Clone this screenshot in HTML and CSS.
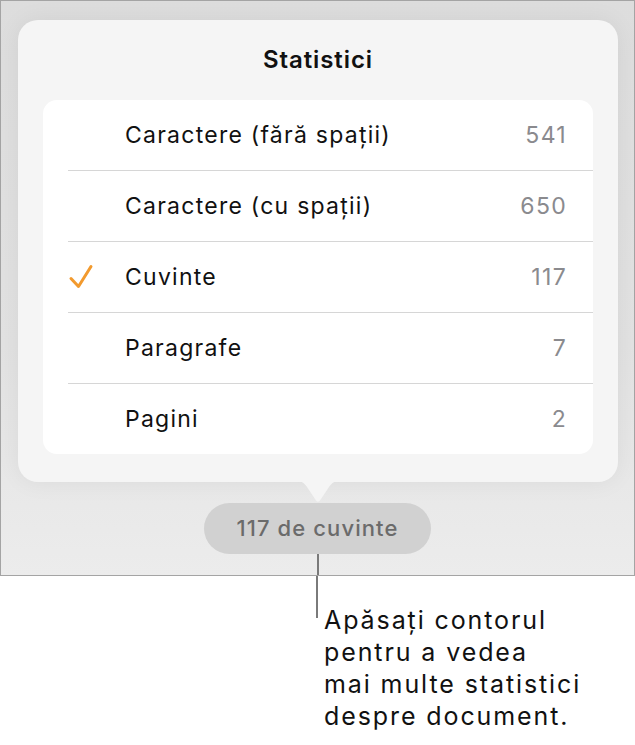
FILE: index.html
```html
<!DOCTYPE html>
<html lang="ro">
<head>
    <meta charset="UTF-8">
    <meta name="viewport" content="width=device-width, initial-scale=1.0">
    <title>Statistici</title>
    <link rel="stylesheet" href="styles.css">
</head>
<body>
    <div class="frame">
        <div class="card">
            <h2 class="card-title">Statistici</h2>
            <ul class="stats-list">
                <li class="stat-row">
                    <span class="stat-check"></span>
                    <span class="stat-label">Caractere (fără spații)</span>
                    <span class="stat-value">541</span>
                </li>
                <li class="stat-row">
                    <span class="stat-check"></span>
                    <span class="stat-label">Caractere (cu spații)</span>
                    <span class="stat-value">650</span>
                </li>
                <li class="stat-row">
                    <span class="stat-check">
                        <svg width="26" height="26" viewBox="0 0 26 26">
                            <path d="M3 14.5 L10.5 22.5 L23 2.5" fill="none" stroke="#f29a2e" stroke-width="3" stroke-linecap="round" stroke-linejoin="round"/>
                        </svg>
                    </span>
                    <span class="stat-label">Cuvinte</span>
                    <span class="stat-value">117</span>
                </li>
                <li class="stat-row">
                    <span class="stat-check"></span>
                    <span class="stat-label">Paragrafe</span>
                    <span class="stat-value">7</span>
                </li>
                <li class="stat-row">
                    <span class="stat-check"></span>
                    <span class="stat-label">Pagini</span>
                    <span class="stat-value">2</span>
                </li>
            </ul>
            <svg class="card-arrow" width="44" height="22" viewBox="0 0 44 22">
                <path d="M0 0 L44 0 C38 0 36 2 33 6 L24 19.5 C23 21 21 21 20 19.5 L11 6 C8 2 6 0 0 0 Z" fill="#f5f5f5"/>
            </svg>
        </div>
        <div class="word-count">117 de cuvinte</div>
        <div class="stem stem-inner"></div>
    </div>

    <div class="callout">
        <div class="stem stem-outer"></div>
        <p class="callout-text">Apăsați contorul<br>pentru a vedea<br>mai multe statistici<br>despre document.</p>
    </div>
</body>
</html>
```

FILE: styles.css
```css
body {
    margin: 0;
    padding: 0;
    background-color: #ffffff;
    font-family: Inter, Roboto, "Liberation Sans", sans-serif;
    color: #1c1c1e;
}

.frame {
    box-sizing: border-box;
    width: 635px;
    height: 576px;
    border: 1px solid #a4a4a4;
    background: linear-gradient(180deg, #dddddd 0%, #e2e2e2 60%, #ececec 100%);
    padding-top: 19px;
    display: flex;
    flex-direction: column;
    align-items: center;
}

.card {
    position: relative;
    width: 600px;
    height: 462px;
    margin-left: 1px;
    box-sizing: border-box;
    background-color: #f5f5f5;
    border-radius: 20px;
    box-shadow: 0 0 24px rgba(0, 0, 0, 0.06);
    padding: 0 25px 0 25px;
}

.card-title {
    margin: 0;
    height: 80px;
    line-height: 80px;
    text-align: center;
    font-size: 24px;
    font-weight: 600;
    letter-spacing: 0.9px;
    color: #111111;
}

.stats-list {
    list-style: none;
    margin: 0;
    padding: 0;
    background-color: #ffffff;
    border-radius: 14px;
    overflow: hidden;
}

.stat-row {
    display: flex;
    align-items: center;
    height: 70px;
    margin-left: 25px;
    padding-right: 27px;
    border-top: 1px solid #d6d6d6;
}

.stat-row:first-child {
    border-top: none;
}

.stat-check {
    width: 57px;
    height: 26px;
    display: flex;
    align-items: center;
}

.stat-label {
    flex: 1;
    font-size: 23px;
    letter-spacing: 1.25px;
    color: #111111;
}

.stat-value {
    font-size: 23px;
    letter-spacing: 1.3px;
    margin-right: -1px;
    color: #8a8a8e;
}

.card-arrow {
    position: absolute;
    left: 278px;
    bottom: -21px;
}

.word-count {
    margin-top: 21px;
    width: 227px;
    height: 51px;
    border-radius: 26px;
    background-color: #d1d1d1;
    color: #6b6b6b;
    font-size: 22px;
    font-weight: 500;
    letter-spacing: 1.1px;
    text-align: center;
    line-height: 51px;
}

.stem {
    width: 2px;
    background-color: #7a7a7a;
}

.stem-inner {
    height: 21px;
    margin-left: 1px;
}

.callout {
    display: flex;
    align-items: flex-start;
    padding-left: 316px;
}

.stem-outer {
    height: 42px;
}

.callout-text {
    margin: 28px 0 0 6px;
    font-size: 25px;
    line-height: 32px;
    letter-spacing: 1.9px;
    color: #111111;
}
```
